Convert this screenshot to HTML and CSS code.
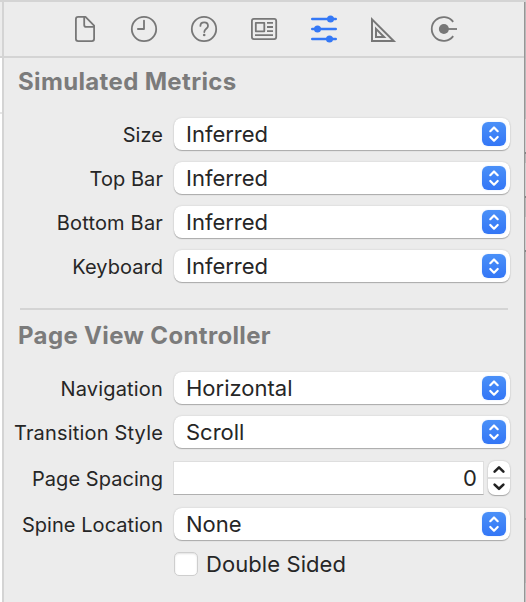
FILE: index.html
```html
<!DOCTYPE html>
<html lang="en">
<head>
<meta charset="utf-8">
<title>Attributes Inspector</title>
<link rel="stylesheet" href="styles.css">
</head>
<body>
<svg class="defs" width="0" height="0">
  <symbol id="updown" viewBox="0 0 24 24"><path d="M8.3 9.2 12 5.5l3.7 3.7M8.3 15l3.7 3.7 3.7-3.7"/></symbol>
</svg>
<div class="window">
  <div class="editor-edge"><div class="edge-top"></div><div class="edge-line"></div></div>
  <main class="inspector">
    <nav class="toolbar">
      <svg viewBox="54 2 60 54"><path d="M78.2 16.9h7.3l8.6 8.7v13.2q0 2.3-2.3 2.3H78.2q-2.3 0-2.3-2.3V19.2q0-2.3 2.3-2.3zM84.2 17v7.9q0 1.9 1.9 1.9h8"/></svg>
      <svg viewBox="114 2 60 54"><circle cx="144" cy="29" r="12.2"/><path d="M144 20.6V29h-6.1" stroke-linecap="round"/></svg>
      <svg viewBox="174 2 60 54"><circle cx="204" cy="29" r="12.2"/><path d="M200.4 25.9c0-4.6 7.6-4.6 7.6 0 0 3-3.7 2.8-3.7 6.1" stroke-linecap="round"/><circle class="solid" cx="204.2" cy="35" r="1.3"/></svg>
      <svg viewBox="234 2 60 54"><rect x="251.9" y="18.9" width="24.3" height="20.2" rx="2"/><path d="M255.8 22.8h8.5v8.5h-8.5zM267 22.9h6M267 27h6M267 31.1h6M255 35.1h18"/></svg>
      <svg class="active" viewBox="294 2 60 54"><path d="M312.2 19h23.6M312.2 29h23.6M312.2 39h23.6" stroke-linecap="round"/><circle class="solid" cx="330.5" cy="19" r="3.5"/><circle class="solid" cx="317.5" cy="29" r="3.5"/><circle class="solid" cx="329.5" cy="39" r="3.5"/></svg>
      <svg class="ruler" viewBox="354 2 60 54"><path d="M372 19.4v21.7h21.7zM376 28.9v8.1h8.1z"/></svg>
      <svg viewBox="414 2 60 54"><path d="M453.2 21.9a11.9 11.9 0 1 0 0 14.2"/><circle class="solid" cx="443.9" cy="29" r="5"/><path d="M444 29h13"/></svg>
    </nav>
    <section class="group">
      <h2>Simulated Metrics</h2>
      <div class="rows">
        <div class="row"><span class="label">Size</span><div class="popup"><span>Inferred</span><svg class="arrows"><use href="#updown"/></svg></div></div>
        <div class="row"><span class="label">Top Bar</span><div class="popup"><span>Inferred</span><svg class="arrows"><use href="#updown"/></svg></div></div>
        <div class="row"><span class="label wide">Bottom Bar</span><div class="popup"><span>Inferred</span><svg class="arrows"><use href="#updown"/></svg></div></div>
        <div class="row"><span class="label">Keyboard</span><div class="popup"><span>Inferred</span><svg class="arrows"><use href="#updown"/></svg></div></div>
      </div>
    </section>
    <hr>
    <section class="group">
      <h2 class="controller">Page View Controller</h2>
      <div class="rows">
        <div class="row"><span class="label wide">Navigation</span><div class="popup"><span>Horizontal</span><svg class="arrows"><use href="#updown"/></svg></div></div>
        <div class="row"><span class="label wide">Transition Style</span><div class="popup"><span>Scroll</span><svg class="arrows"><use href="#updown"/></svg></div></div>
        <div class="row number"><span class="label">Page Spacing</span><div class="field">0</div><svg class="stepper" viewBox="0 0 22 34"><path class="split" d="M0 17h22"/><path d="m6.6 10.6 4.4-4.2 4.4 4.2M6.6 23.6l4.4 4.2 4.4-4.2"/></svg></div>
        <div class="row"><span class="label">Spine Location</span><div class="popup"><span>None</span><svg class="arrows"><use href="#updown"/></svg></div></div>
      </div>
      <div class="check"><span class="box"></span><span>Double Sided</span></div>
    </section>
  </main>
  <div class="window-edge"></div>
</div>
</body>
</html>
```
FILE: styles.css
```css
* { box-sizing: border-box; }
body { margin: 0; background: #ececec; color: #262626; font-family: Inter, "Liberation Sans", sans-serif; overflow: hidden; }
.defs { display: block; }
.window { display: flex; width: 526px; height: 602px; border-top: 2px solid #d4d4d4; }
.editor-edge { width: 2px; background: #fff; }
.edge-top { height: 56px; background: #ececec; border-bottom: 2px solid #d4d4d4; }
.edge-line { height: 56px; border-bottom: 2px solid #e6e6e6; }
.inspector { flex: 1; border-left: 2px solid #d4d4d4; min-width: 0; }
.toolbar { display: flex; height: 56px; padding-left: 50px; border-bottom: 2px solid #d4d4d4; }
.toolbar svg { width: 60px; height: 54px; fill: none; stroke: #777; stroke-width: 1.8; stroke-linejoin: round; }
.toolbar .solid { fill: #777; stroke: none; }
.toolbar .active { stroke: #3478f6; stroke-width: 2.4; }
.toolbar .active .solid { fill: #3478f6; }
.toolbar .ruler { stroke-linejoin: miter; stroke-width: 2; }
.group { padding-right: 14px; }
h2 { margin: 0; padding: 8px 0 0 14px; height: 60px; font-size: 24px; line-height: 32px; font-weight: 700; color: #7b7b7b; letter-spacing: .35px; white-space: nowrap; }
h2.controller { height: 62px; padding-top: 10px; }
.rows { display: flex; flex-direction: column; gap: 12px; }
.row { display: flex; align-items: center; height: 32px; }
.label { width: 159px; margin-right: 11px; text-align: right; font-size: 20px; line-height: 32px; letter-spacing: .05px; white-space: nowrap; padding-top: 1px; }
.label.wide { letter-spacing: .18px; }
.popup { flex: 1; display: flex; align-items: center; justify-content: space-between; height: 32px; padding: 0 4px 0 12px; border-radius: 8px; background: #fff; box-shadow: 0 1px 1px rgba(0,0,0,.25), 0 0 2px rgba(0,0,0,.16); font-size: 22px; line-height: 32px; }
.arrows { width: 24px; height: 24px; border-radius: 6px; background: linear-gradient(#4a90f8, #3376f6); box-shadow: 0 0 2px rgba(52,120,246,.2); fill: none; stroke: #fff; stroke-width: 2.2; stroke-linecap: round; stroke-linejoin: round; }
hr { width: 488px; height: 2px; margin: 26px 0 0 16px; border: 0; background: #d4d4d4; }
.number { height: 36px; }
.number .label { margin-right: 10px; }
.field { flex: 1; height: 34px; padding-right: 6px; background: #fff; border: 1px solid #dedede; border-bottom-color: #b0b0b0; text-align: right; font-size: 22px; line-height: 33px; }
.stepper { width: 22px; height: 34px; margin-left: 4px; border-radius: 7px; background: #fff; box-shadow: 0 1px 1px rgba(0,0,0,.25), 0 0 2px rgba(0,0,0,.2); fill: none; stroke: #222; stroke-width: 2.6; stroke-linecap: round; stroke-linejoin: round; }
.stepper .split { stroke: #ddd; stroke-width: 2; }
.check { display: flex; align-items: center; gap: 8px; height: 24px; margin: 12px 0 0 170px; font-size: 22px; line-height: 24px; letter-spacing: .08px; }
.box { width: 24px; height: 24px; border-radius: 5px; background: #fff; border: 1px solid #cecece; box-shadow: inset 0 1px 2px rgba(0,0,0,.12); }
.window-edge { width: 2px; border-left: 1px solid #969696; background: linear-gradient(#b8b8b8 117px, #d0d0d0 117px 150px, #858585 150px 152px, #b8b8b8 152px 161px, #d0d0d0 161px 194px, #858585 194px 196px, #b8b8b8 196px 215px, #d0d0d0 215px 248px, #858585 248px 250px, #b8b8b8 250px 516px, #989898 516px 518px, #b4b4b4 518px 581px, #c4c4c4 581px); }
```
